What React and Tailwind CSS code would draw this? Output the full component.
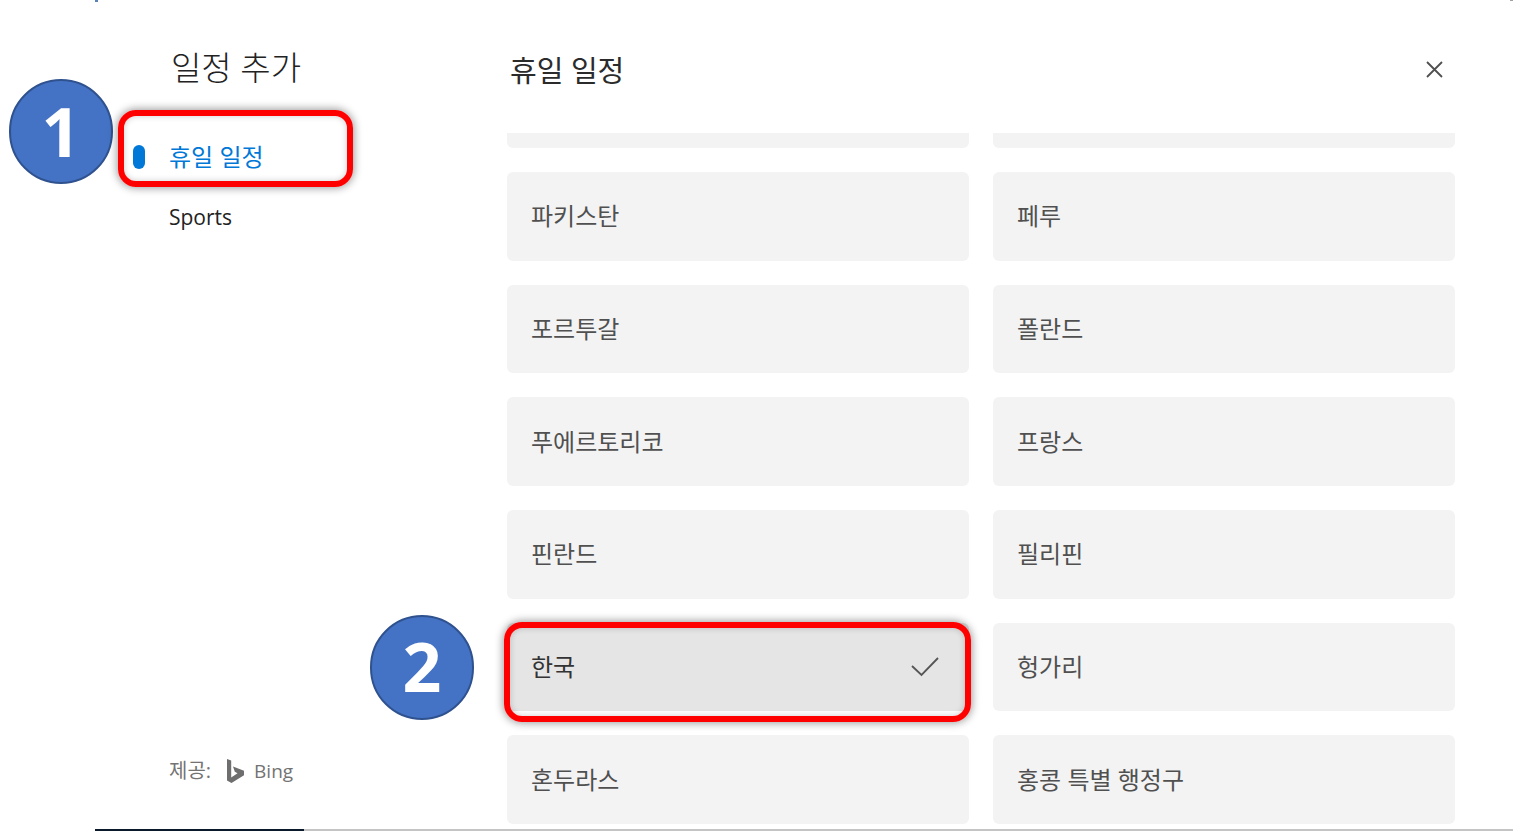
import clsx from "clsx";

const navItems = [
  { id: "holidays", label: "휴일 일정" },
  { id: "sports", label: "Sports" },
];

const countries = [
  "파키스탄",
  "페루",
  "포르투갈",
  "폴란드",
  "푸에르토리코",
  "프랑스",
  "핀란드",
  "필리핀",
  "한국",
  "헝가리",
  "혼두라스",
  "홍콩 특별 행정구",
];

// Numbered step marker
function StepBadge({ number, className }) {
  return (
    <span
      className={clsx(
        "absolute z-10 flex h-[105px] w-[104px] items-center justify-center rounded-full border-2 border-[#2f528f] bg-[#4472c4] pb-0.5 text-[68px] leading-none font-bold text-white",
        className
      )}
    >
      {number}
    </span>
  );
}

// Red frame around the control of a step
function StepFrame({ className }) {
  return (
    <span
      className={clsx(
        "pointer-events-none absolute z-10 rounded-[18px] border-6 border-[#ff0000] shadow-[0_0_8px_1px_rgba(0,0,0,0.4),inset_0_0_6px_rgba(0,0,0,0.2)]",
        className
      )}
    />
  );
}

function BingLogo() {
  return (
    <svg width="17" height="24" viewBox="0 0 17 24" fill="#6e6e6e" aria-hidden="true">
      <path d="M0 0l4.200 1.500v16.900l6.300-4.200-2.700-1.400L6 7.500l11 4.200v4.600L4.500 24 0 21.500z" />
    </svg>
  );
}

function CheckIcon() {
  return (
    <svg width="28" height="20" viewBox="0 0 28 20" fill="none" stroke="#555" strokeWidth="1.8" aria-hidden="true">
      <path d="M1 9l9.500 9L27 1" />
    </svg>
  );
}

function CountryCard({ name, selected }) {
  return (
    <li className="relative">
      <button
        type="button"
        aria-pressed={selected}
        className={clsx(
          "flex h-full w-full items-center justify-between rounded-md pr-[30px] pl-6 text-left text-[24px] leading-8",
          selected ? "bg-[#e5e5e5] text-[#333333]" : "bg-[#f3f3f3] text-[#505050]"
        )}
      >
        <span>{name}</span>
        {selected && <CheckIcon />}
      </button>
      {selected && (
        <>
          <StepBadge number={2} className="-top-2 -left-[137px]" />
          <StepFrame className="-top-px -right-[2px] -bottom-[11px] -left-[3px]" />
        </>
      )}
    </li>
  );
}

export default function App() {
  return (
    <div className="relative flex min-h-screen flex-col overflow-hidden bg-white pl-[95px] font-['Open_Sans','Noto_Sans_CJK_KR',sans-serif]">
      {/* Corners of the window behind the dialog */}
      <span className="absolute top-0 left-[95px] h-0.5 w-[3px] bg-[#5b83b5]" />
      <span className="absolute top-0 right-0 h-px w-[3px] bg-[#a0a0a0]" />

      <div className="flex flex-1">
        <aside className="flex w-[412px] shrink-0 flex-col">
          <h1 className="flex h-[127px] items-center pt-2 pl-[76px] text-[33px] leading-10 font-light text-[#222222]">
            일정 추가
          </h1>
          <nav>
            <ul>
              {navItems.map((item) => {
                const active = item.id === "holidays";
                return (
                  <li key={item.id} className="relative h-[60px]">
                    <button
                      type="button"
                      aria-current={active ? "page" : undefined}
                      className={clsx(
                        "flex h-full w-[260px] items-center pl-[38px] text-left leading-8",
                        active ? "text-[24px] text-[#0078d7]" : "text-[21px] text-[#222222]"
                      )}
                    >
                      <span
                        className={clsx("mr-6 h-6 w-3 rounded-full", active && "bg-[#0078d7]")}
                      />
                      {item.label}
                    </button>
                    {active && (
                      <>
                        <StepBadge number={1} className="-top-12 -left-[86px]" />
                        <StepFrame className="-top-[17px] left-[23px] h-[77px] w-[235px]" />
                      </>
                    )}
                  </li>
                );
              })}
            </ul>
          </nav>
          <footer className="mt-auto flex h-[116px] items-center pl-[74px] text-[20px] leading-8 text-[#737373]">
            <span className="mr-4">제공:</span>
            <BingLogo />
            <span className="ml-2.5 text-[19px]">Bing</span>
          </footer>
        </aside>

        <main className="flex flex-1 flex-col pr-[58px] pb-[5px]">
          <header className="flex h-[133px] items-center justify-between pt-[7px] pr-1 pl-[3px]">
            <h2 className="pt-0.5 text-[29px] leading-10 text-[#2b2b2b]">휴일 일정</h2>
            <button type="button" aria-label="닫기" className="flex h-10 w-8 items-center justify-center">
              <svg width="18" height="18" viewBox="0 0 18 18" fill="none" stroke="#505050" strokeWidth="1.8" aria-hidden="true">
                <path d="M1 1l15 15M16 1L1 16" />
              </svg>
            </button>
          </header>

          {/* Row scrolled almost out of view */}
          <div className="mb-6 grid h-[15px] grid-cols-2 gap-6">
            <span className="rounded-b-md bg-[#f3f3f3]" />
            <span className="rounded-b-md bg-[#f3f3f3]" />
          </div>

          <ul className="grid flex-1 auto-rows-fr grid-cols-2 gap-6">
            {countries.map((name) => (
              <CountryCard key={name} name={name} selected={name === "한국"} />
            ))}
          </ul>
        </main>
      </div>

      <div className="flex h-0.5 bg-[#c4c4c4]">
        <span className="w-[209px] bg-[#0b1a2b]" />
      </div>
    </div>
  );
}
